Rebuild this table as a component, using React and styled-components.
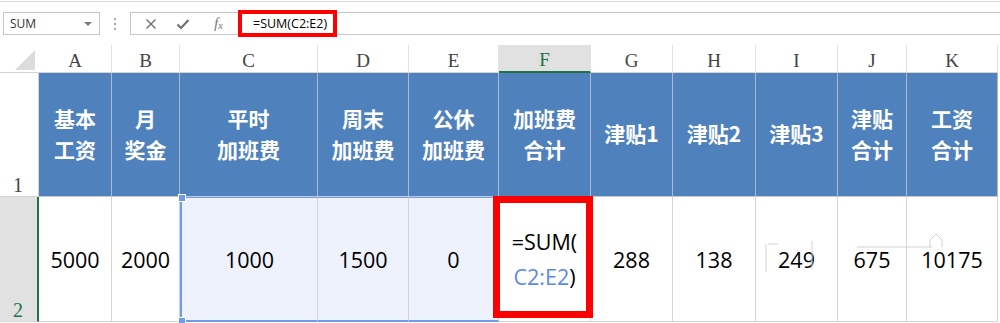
import styled, { createGlobalStyle, css } from "styled-components";

const GlobalStyle = createGlobalStyle`
  html, body {
    margin: 0;
    padding: 0;
    background: #fff;
    overflow: hidden;
  }
  * {
    box-sizing: border-box;
  }
`;

const COLS = [39, 73, 68, 138, 91, 90, 92, 82, 83, 82, 69, 91];
const LETTERS = ["A", "B", "C", "D", "E", "F", "G", "H", "I", "J", "K"];
const HEADS = [
  ["基本", "工资"],
  ["月", "奖金"],
  ["平时", "加班费"],
  ["周末", "加班费"],
  ["公休", "加班费"],
  ["加班费", "合计"],
  ["津贴1"],
  ["津贴2"],
  ["津贴3"],
  ["津贴", "合计"],
  ["工资", "合计"],
];
const VALUES = ["5000", "2000", "1000", "1500", "0", null, "288", "138", "249", "675", "10175"];

const SEL_BLUE = "#6d9ceb";

const Page = styled.div`
  width: 1000px;
  height: 323px;
  background: #fff;
`;

const Toolbar = styled.div`
  height: 44px;
  margin-top: 1px;
  border-top: 1px solid #d9d9d9;
  display: flex;
  align-items: center;
  padding-left: 3px;
`;

const NameBox = styled.div`
  width: 97px;
  height: 23px;
  border: 1px solid #c6c6c6;
  display: flex;
  align-items: center;
  justify-content: space-between;
  padding: 0 7px 0 6px;
  font: 12px "Open Sans", "Liberation Sans", sans-serif;
  color: #333;
`;

const Caret = styled.span`
  width: 0;
  height: 0;
  border-left: 4px solid transparent;
  border-right: 4px solid transparent;
  border-top: 4px solid #7a7a7a;
`;

const Dots = styled.div`
  width: 30px;
  display: flex;
  flex-direction: column;
  align-items: center;
  gap: 3px;

  span {
    width: 2px;
    height: 2px;
    background: #a8a8a8;
  }
`;

const FormulaBox = styled.div`
  flex: 1;
  height: 23px;
  border: 1px solid #c6c6c6;
  border-right: none;
  display: flex;
  align-items: center;
  padding-left: 4px;
`;

const IconSlot = styled.div`
  width: ${(p) => p.w || 32}px;
  display: flex;
  justify-content: center;
  align-items: center;
  color: #6f6f6f;
`;

const Fx = styled.span`
  font: italic 14px "Liberation Serif", serif;
  color: #6f6f6f;

  sub {
    font-size: 10px;
    vertical-align: -1px;
  }
`;

const RedBox = styled.div`
  width: 99px;
  height: 27px;
  border: 4px solid #ff0000;
  display: flex;
  align-items: center;
  padding-left: 11px;
  font: 12.5px "Open Sans", "Liberation Sans", sans-serif;
  color: #000;
  background: #fff;
`;

const Sheet = styled.div`
  position: relative;
  display: grid;
  grid-template-columns: ${COLS.map((c) => `${c}px`).join(" ")};
  grid-template-rows: 28px 124px 125px;
`;

const Corner = styled.div`
  display: flex;
  align-items: flex-end;
  justify-content: flex-end;
  padding: 0 4px 2px 0;
  border-bottom: 1px solid #d4d4d4;

  span {
    width: 0;
    height: 0;
    border-left: 20px solid transparent;
    border-bottom: 20px solid #dcdcdc;
  }
`;

const ColHead = styled.div`
  display: flex;
  justify-content: center;
  align-items: center;
  padding-top: 4px;
  font: 19px "Liberation Serif", "DejaVu Serif", serif;
  color: #444;
  border-right: 1px solid #e2e2e2;
  border-bottom: 1px solid #d4d4d4;

  ${(p) =>
    p.active &&
    css`
      background: #e1e1e1;
      color: #217346;
      border-bottom: 2px solid #217346;
    `}
`;

const RowHead = styled.div`
  display: flex;
  align-items: flex-end;
  padding: 0 0 0 13px;
  font: 20px "Liberation Serif", "DejaVu Serif", serif;
  line-height: 22px;
  color: #444;
  border-right: 1px solid #d4d4d4;
  border-bottom: 1px solid #d4d4d4;

  ${(p) =>
    p.active &&
    css`
      background: #e1e1e1;
      color: #217346;
      border-right: 2px solid #217346;
    `}
`;

const HeadCell = styled.div`
  display: flex;
  flex-direction: column;
  justify-content: center;
  align-items: center;
  background: #4f81bd;
  color: #fff;
  font: 700 21px "Noto Sans CJK SC", "Noto Sans", sans-serif;
  line-height: 31px;
  border-right: 1px solid #a9b9cf;
  border-bottom: 1px solid #c9c9c9;
  padding-bottom: 2px;
`;

const DataCell = styled.div`
  position: relative;
  display: flex;
  flex-direction: column;
  justify-content: center;
  align-items: center;
  font: 21.5px "Open Sans", "Liberation Sans", sans-serif;
  color: #000;
  line-height: 35px;
  border-right: 1px solid #d4d4d4;
  border-bottom: 1px solid #d4d4d4;

  ${(p) =>
    p.sel &&
    css`
      background: #edf2fc;
      border-top: 1px solid ${SEL_BLUE};
      border-bottom: 2px solid ${SEL_BLUE};
    `}

  ${(p) =>
    p.selStart &&
    css`
      border-left: 2px solid ${SEL_BLUE};

      &::before,
      &::after {
        content: "";
        position: absolute;
        left: -4px;
        width: 6px;
        height: 6px;
        background: ${SEL_BLUE};
        border: 1px solid #fff;
      }
      &::before {
        top: -4px;
      }
      &::after {
        bottom: -5px;
      }
    `}

  ${(p) =>
    p.framed &&
    css`
      &::after {
        content: "";
        position: absolute;
        top: -1px;
        left: -6px;
        right: -3px;
        bottom: 3px;
        border: 7px solid #ff0000;
      }
    `}
`;

const Ref = styled.span`
  color: #5b8ae8;
`;

const Watermark = styled.svg`
  position: absolute;
  left: 756px;
  top: 152px;
  pointer-events: none;
`;

const CrossIcon = () => (
  <svg width="12" height="12" viewBox="0 0 12 12">
    <path d="M1.5 1.5 L10.5 10.5 M10.5 1.5 L1.5 10.5" stroke="#6f6f6f" strokeWidth="1.4" fill="none" />
  </svg>
);

const CheckIcon = () => (
  <svg width="14" height="12" viewBox="0 0 14 12">
    <path d="M1.5 6.5 L5 10 L12.5 2" stroke="#6f6f6f" strokeWidth="2.2" fill="none" />
  </svg>
);

export default function App() {
  return (
    <Page>
      <GlobalStyle />
      <Toolbar>
        <NameBox>
          SUM
          <Caret />
        </NameBox>
        <Dots>
          <span />
          <span />
          <span />
        </Dots>
        <FormulaBox>
          <IconSlot>
            <CrossIcon />
          </IconSlot>
          <IconSlot>
            <CheckIcon />
          </IconSlot>
          <IconSlot w={39}>
            <Fx>
              f<sub>x</sub>
            </Fx>
          </IconSlot>
          <RedBox>=SUM(C2:E2)</RedBox>
        </FormulaBox>
      </Toolbar>

      <Sheet>
        <Corner>
          <span />
        </Corner>
        {LETTERS.map((l) => (
          <ColHead key={l} active={l === "F"}>
            {l}
          </ColHead>
        ))}

        <RowHead>1</RowHead>
        {HEADS.map((lines, i) => (
          <HeadCell key={i}>
            {lines.map((t) => (
              <span key={t}>{t}</span>
            ))}
          </HeadCell>
        ))}

        <RowHead active>2</RowHead>
        {VALUES.map((v, i) =>
          v === null ? (
            <DataCell key={i} framed>
              <span>=SUM(</span>
              <span>
                <Ref>C2:E2</Ref>)
              </span>
            </DataCell>
          ) : (
            <DataCell key={i} sel={i >= 2 && i <= 4} selStart={i === 2}>
              {v}
            </DataCell>
          )
        )}

        <Watermark width="200" height="100" viewBox="0 0 200 100">
          <g stroke="#d2d2d2" strokeWidth="1" fill="none">
            <path d="M10 47 L10 75" />
            <path d="M12 47 L22 47" />
            <path d="M56 44 L56 72" />
            <path d="M101 50 L176 50" />
            <path d="M174 50 L174 43 L180 37 L186 43 L186 50" />
          </g>
        </Watermark>
      </Sheet>
    </Page>
  );
}
